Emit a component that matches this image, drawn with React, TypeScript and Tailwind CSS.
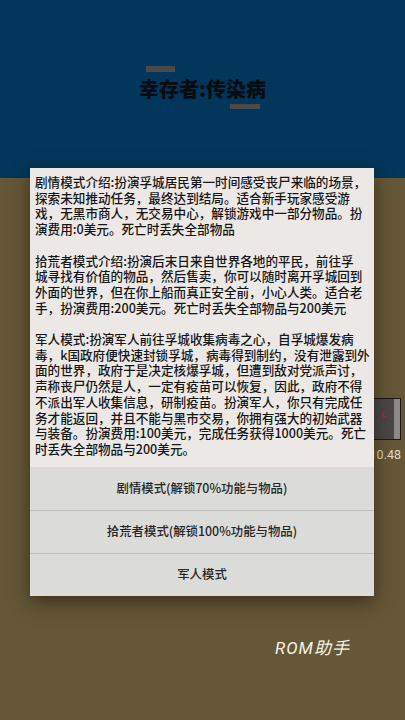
import React from "react";

const cjk = { fontFamily: '"Noto Sans CJK SC", "Noto Sans", sans-serif' };

// each mode description, broken into the lines the dialog shows
const intro: string[][] = [
  [
    "剧情模式介绍:扮演孚城居民第一时间感受丧尸来临的场景，",
    "探索未知推动任务，最终达到结局。适合新手玩家感受游",
    "戏，无黑市商人，无交易中心，解锁游戏中一部分物品。扮",
    "演费用:0美元。死亡时丢失全部物品",
  ],
  [
    "拾荒者模式介绍:扮演后末日来自世界各地的平民，前往孚",
    "城寻找有价值的物品，然后售卖，你可以随时离开孚城回到",
    "外面的世界，但在你上船而真正安全前，小心人类。适合老",
    "手，扮演费用:200美元。死亡时丢失全部物品与200美元",
  ],
  [
    "军人模式:扮演军人前往孚城收集病毒之心，自孚城爆发病",
    "毒，k国政府便快速封锁孚城，病毒得到制约，没有泄露到外",
    "面的世界，政府于是决定核爆孚城，但遭到敌对党派声讨，",
    "声称丧尸仍然是人，一定有疫苗可以恢复，因此，政府不得",
    "不派出军人收集信息，研制疫苗。扮演军人，你只有完成任",
    "务才能返回，并且不能与黑市交易，你拥有强大的初始武器",
    "与装备。扮演费用:100美元，完成任务获得1000美元。死亡",
    "时丢失全部物品与200美元。",
  ],
];

const modes = ["剧情模式(解锁70%功能与物品)", "拾荒者模式(解锁100%功能与物品)", "军人模式"];

const ModeDialog: React.FC = () => (
  <div
    className="absolute left-[30px] top-[168px] w-[344px] bg-[#ebe8e6] shadow-[0_6px_18px_rgba(20,15,5,0.55)]"
    style={cjk}
  >
    <div className="pl-[5px] pt-[6px] pb-[10px] text-[12.6px] leading-[15.7px] font-medium text-[#161616]">
      {intro.map((para, i) => (
        <div key={i} className={i > 0 ? "mt-[15.7px]" : ""}>
          {para.map((line) => (
            <div key={line} className="whitespace-nowrap">
              {line}
            </div>
          ))}
        </div>
      ))}
    </div>
    <div className="flex flex-col bg-[#dbdbd9]">
      {modes.map((m, i) => (
        <button
          key={m}
          className={`h-[43px] flex items-center justify-center text-[12.4px] font-medium text-[#262626] ${
            i > 0 ? "border-t border-[#bdbdbb]" : ""
          }`}
        >
          {m}
        </button>
      ))}
    </div>
  </div>
);

export default function App() {
  return (
    <div className="relative w-[405px] h-[720px] overflow-hidden flex flex-col" style={cjk}>
      {/* header */}
      <div className="h-[178px] bg-[#02375b] flex flex-col">
        <div className="ml-[146px] mt-[66px] w-[29px] h-[6px] bg-[#4b4a4a]" />
        <h1 className="mt-[5px] text-center text-[20px] leading-[24px] font-black text-[#080c10]">
          幸存者:传染病
        </h1>
        <div className="ml-[230px] mt-[3px] w-[30px] h-[5px] bg-[#4b4a4a]" />
      </div>

      {/* game floor with an item slot on the right */}
      <div className="flex-1 bg-[#655838] flex justify-end pt-[220px] pr-[4px]">
        <div className="flex flex-col items-end">
          <div className="w-[36px] h-[42px] border border-[#1c1a18] bg-[#4a4746] flex">
            <div className="flex-1 flex items-start justify-center pt-[10px]">
              <span className="text-[9px] leading-[10px] text-[#a8303a] font-bold pl-[6px]">c</span>
            </div>
            <div className="w-[6px] bg-[#8e8a87]" />
          </div>
          <div className="mt-[8px] text-[12.5px] leading-[14px] text-[#e3dccb]" style={{ fontFamily: '"Roboto", sans-serif' }}>
            10.48
          </div>
        </div>
      </div>

      <ModeDialog />

      <div
        className="absolute left-[275px] top-[636px] text-[17px] italic text-[#f6f1e6] tracking-[1px]"
        style={{ fontFamily: '"Roboto", "Noto Sans CJK SC", sans-serif' }}
      >
        ROM助手
      </div>
    </div>
  );
}
